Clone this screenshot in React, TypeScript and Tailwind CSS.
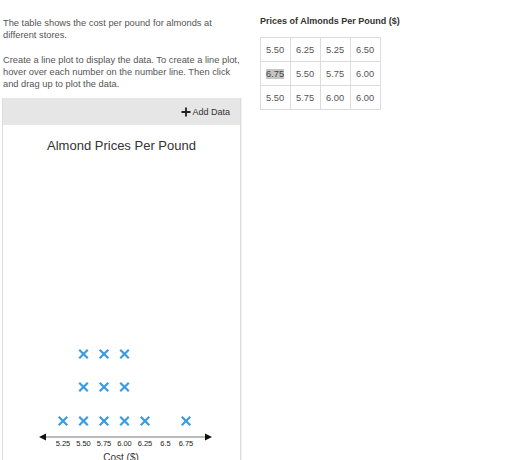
import React from 'react';

const rows = [
  ['5.50', '6.25', '5.25', '6.50'],
  ['6.75', '5.50', '5.75', '6.00'],
  ['5.50', '5.75', '6.00', '6.00'],
];

// x positions (inside the panel) of each tick on the number line
const ticks = [
  { label: '5.25', x: 60 },
  { label: '5.50', x: 80.5 },
  { label: '5.75', x: 101 },
  { label: '6.00', x: 121.5 },
  { label: '6.25', x: 142 },
  { label: '6.5', x: 162.5 },
  { label: '6.75', x: 183 },
];

// how many Xs sit above each tick
const counts = [1, 3, 3, 3, 1, 0, 1];
const rowY = [267, 233, 200];

const Cross = ({ x, y }: { x: number; y: number }) => (
  <g stroke="#3a9be0" strokeWidth="2.2" strokeLinecap="square">
    <line x1={x - 3.5} y1={y - 3.5} x2={x + 3.5} y2={y + 3.5} />
    <line x1={x - 3.5} y1={y + 3.5} x2={x + 3.5} y2={y - 3.5} />
  </g>
);

export default function App() {
  return (
    <div className="flex min-h-[460px] items-start gap-[19px] bg-white pl-[2px] font-['Liberation_Sans',Arial,sans-serif] text-[9.3px] leading-[12px] text-[#555]">
      {/* left column */}
      <div className="flex w-[239px] flex-col">
        <p className="mt-[17px] pl-px">The table shows the cost per pound for almonds at different stores.</p>
        <p className="mt-[13px] pl-px">
          Create a line plot to display the data. To create a line plot, hover over each number on the number line. Then click
          and drag up to plot the data.
        </p>

        <div className="mt-[8px] h-[362px] overflow-hidden border-x border-[#dcdcdc] shadow-[1px_0_1px_rgba(0,0,0,0.05)]">
          <div className="flex h-[27px] items-center justify-end bg-[#e6e6e6] pr-[10px]">
            <button className="flex items-center gap-px text-[9px] text-[#333]">
              <svg width="10" height="10" viewBox="0 0 10 10">
                <path d="M5 0.5v9M0.5 5h9" stroke="#222" strokeWidth="1.8" />
              </svg>
              <span>Add Data</span>
            </button>
          </div>

          <h2 className="mt-[13px] text-center text-[13px] leading-[16px] text-[#333]">Almond Prices Per Pound</h2>

          <svg width="237" height="320" className="block">
            {ticks.map((t, i) =>
              Array.from({ length: counts[i] }).map((_, j) => <Cross key={`${i}-${j}`} x={t.x} y={rowY[j]} />)
            )}
            <line x1="40" y1="283" x2="204" y2="283" stroke="#777" strokeWidth="1" />
            <path d="M36 283 L43 279.5 L43 286.5 Z" fill="#111" />
            <path d="M209 283 L202 279.5 L202 286.5 Z" fill="#111" />
            {ticks.map((t) => (
              <text
                key={t.label}
                x={t.x}
                y="291.5"
                textAnchor="middle"
                fontSize="7.5"
                fill="#222"
                fontFamily="Liberation Sans, Arial, sans-serif"
              >
                {t.label}
              </text>
            ))}
            <text x="118" y="307" textAnchor="middle" fontSize="10" fill="#333" fontFamily="Liberation Sans, Arial, sans-serif">
              Cost ($)
            </text>
          </svg>
        </div>
      </div>

      {/* right column */}
      <div className="flex flex-col">
        <h3 className="mt-[15px] text-[9px] font-bold leading-[12px] text-[#333]">Prices of Almonds Per Pound ($)</h3>
        <table className="mt-[10px] w-[121px] table-fixed border-collapse">
          <tbody>
            {rows.map((r, i) => (
              <tr key={i}>
                {r.map((v, j) => (
                  <td key={j} className="h-[24px] w-[30px] border border-[#dcdcdc] pl-[5px] text-[9.3px] text-[#555]">
                    {i === 1 && j === 0 ? <span className="bg-[#c4c4c4] text-[#444]">{v}</span> : v}
                  </td>
                ))}
              </tr>
            ))}
          </tbody>
        </table>
      </div>
    </div>
  );
}
